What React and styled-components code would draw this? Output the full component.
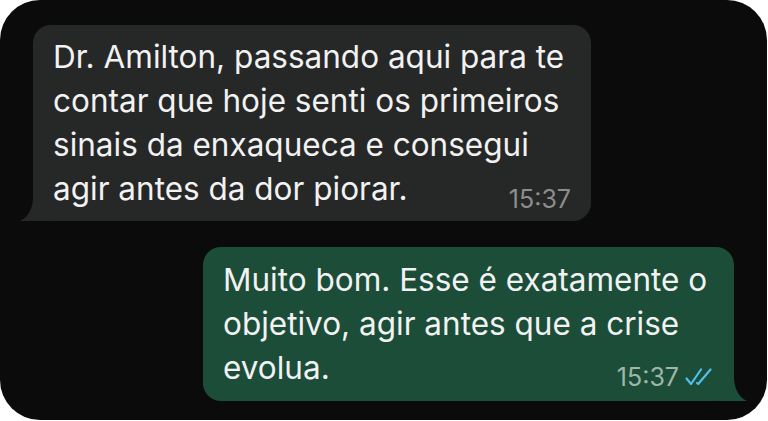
import React from "react";
import styled, { createGlobalStyle } from "styled-components";

const Global = createGlobalStyle`
  html, body { margin: 0; padding: 0; background: #ffffff; }
  body { font-family: Inter, "Noto Sans", sans-serif; }
`;

const Frame = styled.div`
  width: 767px;
  height: 420px;
  background: #0b0b0b;
  border-radius: 40px;
  box-sizing: border-box;
  padding: 25px 33px 0 33px;
  display: flex;
  flex-direction: column;
  gap: 26px;
`;

const Bubble = styled.div`
  position: relative;
  align-self: ${(p) => (p.$out ? "flex-end" : "flex-start")};
  width: ${(p) => p.$w}px;
  box-sizing: border-box;
  padding: ${(p) => (p.$out ? "11px 18px 11px 20px" : "10px 20px 10px 20px")};
  background: ${(p) => (p.$out ? "#1b4d38" : "#262727")};
  border-radius: 18px;
  color: #f2f2f2;
  font-size: 31.5px;
  line-height: 44px;
`;

const Line = styled.div`
  white-space: nowrap;
  height: 44px;
`;

const LastLine = styled.div`
  display: flex;
  justify-content: space-between;
  align-items: flex-start;
  white-space: nowrap;
  height: 44px;
`;

const Meta = styled.span`
  display: flex;
  align-items: center;
  gap: 6px;
  margin-top: ${(p) => p.$top}px;
  font-size: 25px;
  line-height: 24px;
  color: ${(p) => (p.$out ? "#9fb5aa" : "#8d8d8d")};
`;

const Tail = styled.svg`
  position: absolute;
  bottom: 0;
  ${(p) => (p.$out ? "right: -14px;" : "left: -14px;")}
`;

function Check() {
  return (
    <svg width="31" height="20" viewBox="0 0 31 20" fill="none">
      <path d="M1.5 11.5 L6 17 L16 2.5" stroke="#53bdeb" strokeWidth="2.2" strokeLinecap="round" strokeLinejoin="round" />
      <path d="M12 16 L13.2 17 L25.5 2.5" stroke="#53bdeb" strokeWidth="2.2" strokeLinecap="round" strokeLinejoin="round" />
    </svg>
  );
}

export default function App() {
  return (
    <>
      <Global />
      <Frame>
        <Bubble $w={558}>
          <Line>Dr. Amilton, passando aqui para te</Line>
          <Line>contar que hoje senti os primeiros</Line>
          <Line>sinais da enxaqueca e consegui</Line>
          <LastLine>
            <span>agir antes da dor piorar.</span>
            <Meta $top={20}>15:37</Meta>
          </LastLine>
          <Tail width="30" height="24" viewBox="0 0 30 24">
            <path d="M14 0 C14 10 10 20 1 24 L30 24 L30 0 Z" fill="#262727" />
          </Tail>
        </Bubble>
        <Bubble $out $w={531}>
          <Line>Muito bom. Esse é exatamente o</Line>
          <Line>objetivo, agir antes que a crise</Line>
          <LastLine>
            <span>evolua.</span>
            <Meta $out $top={19}>
              15:37
              <Check />
            </Meta>
          </LastLine>
          <Tail $out width="30" height="24" viewBox="0 0 30 24">
            <path d="M16 0 C16 10 20 20 29 24 L0 24 L0 0 Z" fill="#1b4d38" />
          </Tail>
        </Bubble>
      </Frame>
    </>
  );
}
